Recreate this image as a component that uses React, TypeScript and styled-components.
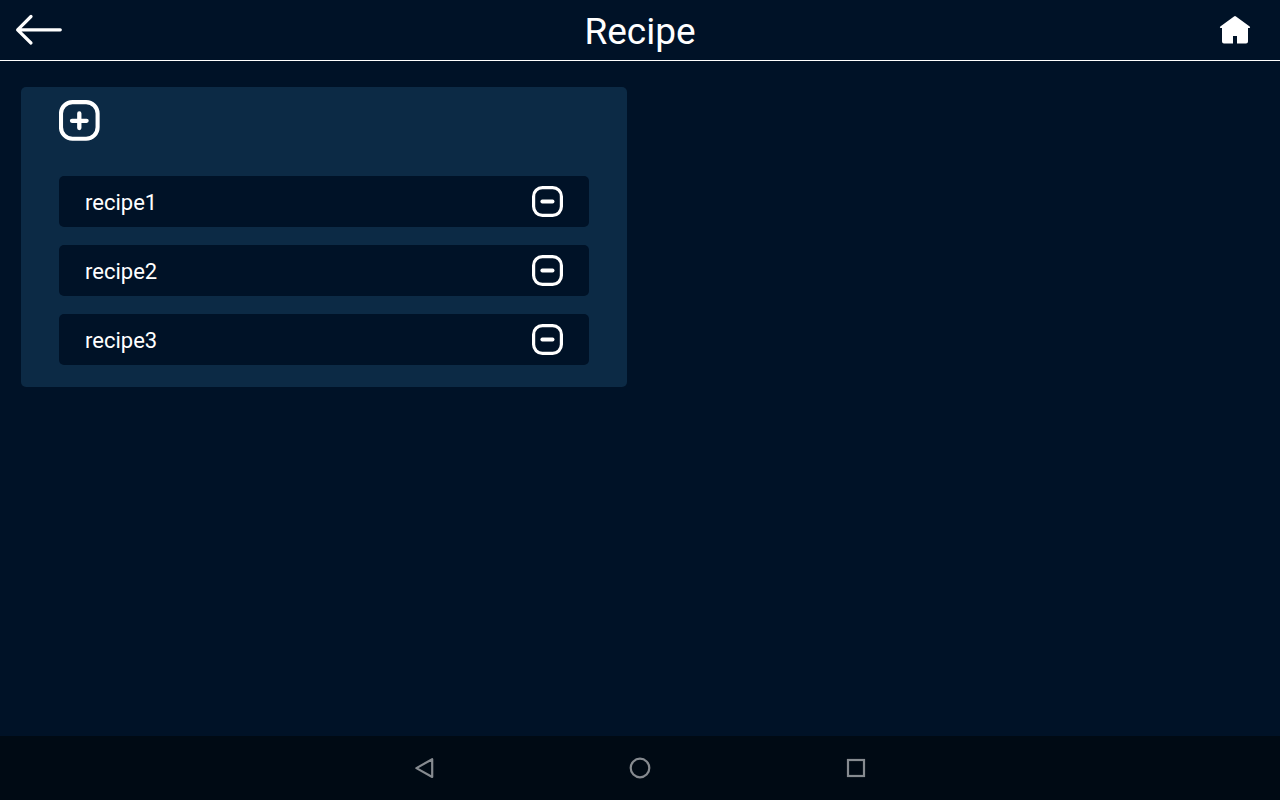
import React from 'react';
import styled, { createGlobalStyle } from 'styled-components';

const GlobalStyle = createGlobalStyle`
  * { box-sizing: border-box; }
  body {
    margin: 0;
    background: #001227;
    color: #ffffff;
    font-family: Roboto, sans-serif;
  }
  button {
    display: flex;
    padding: 0;
    border: 0;
    background: none;
    color: inherit;
    cursor: pointer;
  }
  svg { display: block; }
`;

const Screen = styled.div`
  display: flex;
  flex-direction: column;
  height: 100vh;
  min-height: 800px;
`;

const Header = styled.header`
  display: grid;
  grid-template-columns: 80px 1fr 80px;
  height: 61px;
  border-bottom: 1px solid #ffffff;
`;

const Title = styled.h1`
  margin: 0;
  padding-top: 3px;
  font-size: 37px;
  font-weight: 400;
  line-height: 58px;
  height: 60px;
  text-align: center;
`;

const HomeButton = styled.button`
  justify-content: flex-end;
`;

const Content = styled.main`
  flex: 1;
  padding: 26px 21px;
`;

const Panel = styled.section`
  width: 606px;
  height: 300px;
  padding: 12px 38px 0;
  border-radius: 5px;
  background: #0c2a45;
`;

const RecipeList = styled.ul`
  display: flex;
  flex-direction: column;
  gap: 18px;
  margin: 35px 0 0;
  padding: 0;
  list-style: none;
`;

const RecipeRow = styled.li`
  display: flex;
  align-items: center;
  justify-content: space-between;
  height: 51px;
  padding: 0 25px 0 26px;
  border-radius: 5px;
  background: #001227;
`;

const RecipeName = styled.span`
  padding-top: 3px;
  font-size: 22px;
  line-height: 26px;
`;

const NavBar = styled.nav`
  display: flex;
  justify-content: center;
  gap: 152px;
  height: 64px;
  background: #000a14;
  color: #868b90;
`;

const recipes = ['recipe1', 'recipe2', 'recipe3'];

const BackIcon = () => (
  <svg width="80" height="60" viewBox="0 0 80 60" fill="none" stroke="currentColor" strokeWidth="3.2" strokeLinecap="round" strokeLinejoin="round">
    <path d="M60.3 29.8H18M31 16.5L17.6 29.8L31 43" />
  </svg>
);

const HomeIcon = () => (
  <svg width="80" height="60" viewBox="0 0 80 60" fill="currentColor">
    <path d="M34 16.4Q35 15.6 36 16.4L49.7 26.4Q50.7 27.6 49.5 28H48V41.6Q48 43.5 46 43.5H37V36H33V43.5H24Q22 43.5 22 41.6V28H20.5Q19.3 27.6 20.3 26.4Z" />
  </svg>
);

const AddIcon = () => (
  <svg width="42" height="42" viewBox="0 0 42 42" fill="none" stroke="currentColor" strokeLinecap="round">
    <rect x="2" y="3.1" width="36.6" height="36.6" rx="11.5" strokeWidth="4.1" />
    <path d="M20.3 14.4V29M13 21.8H27.6" strokeWidth="4.3" />
  </svg>
);

const RemoveIcon = () => (
  <svg width="32" height="32" viewBox="0 0 32 32" fill="none" stroke="currentColor" strokeLinecap="round">
    <rect x="1.6" y="1.6" width="27.8" height="27.8" rx="8.8" strokeWidth="3.2" />
    <path d="M10.3 15.5H20.6" strokeWidth="3.8" />
  </svg>
);

const NavIcon = ({ children }: { children: React.ReactNode }) => (
  <svg width="64" height="64" viewBox="0 0 64 64" fill="none" stroke="currentColor" strokeWidth="2.2">
    {children}
  </svg>
);

export default function App() {
  return (
    <>
      <GlobalStyle />
      <Screen>
        <Header>
          <button aria-label="Back"><BackIcon /></button>
          <Title>Recipe</Title>
          <HomeButton aria-label="Home"><HomeIcon /></HomeButton>
        </Header>
        <Content>
          <Panel>
            <button aria-label="Add recipe"><AddIcon /></button>
            <RecipeList>
              {recipes.map((name) => (
                <RecipeRow key={name}>
                  <RecipeName>{name}</RecipeName>
                  <button aria-label={`Remove ${name}`}><RemoveIcon /></button>
                </RecipeRow>
              ))}
            </RecipeList>
          </Panel>
        </Content>
        <NavBar>
          <button aria-label="System back">
            <NavIcon><path d="M40.2 23.2V41L24.4 32.1Z" strokeLinejoin="round" /></NavIcon>
          </button>
          <button aria-label="System home">
            <NavIcon><circle cx="32" cy="32" r="9.3" /></NavIcon>
          </button>
          <button aria-label="Recent apps">
            <NavIcon><rect x="24" y="24" width="16" height="16" /></NavIcon>
          </button>
        </NavBar>
      </Screen>
    </>
  );
}
